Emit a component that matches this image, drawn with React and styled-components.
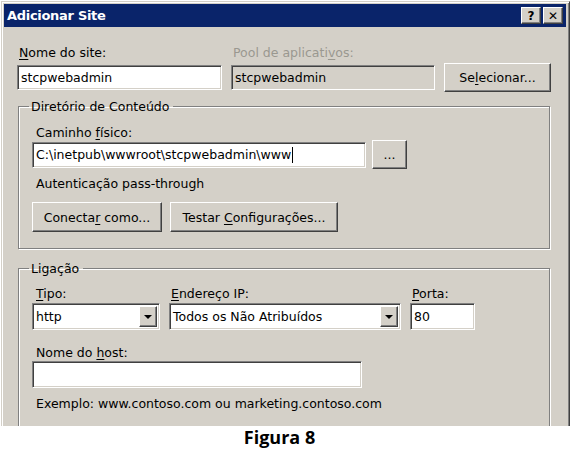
import React from 'react';
import styled, { createGlobalStyle, css } from 'styled-components';

const face = '#d4d0c8';
const shadow = '#808080';
const dark = '#404040';

const GlobalStyle = createGlobalStyle`
  html, body {
    margin: 0;
    padding: 0;
    background: #fff;
  }
  body {
    font-family: "DejaVu Sans", Verdana, sans-serif;
    font-size: 12.5px;
    color: #000;
  }
`;

const Page = styled.div`
  width: 571px;
  height: 454px;
  overflow: hidden;
  display: flex;
  flex-direction: column;
`;

const Window = styled.div`
  margin: 1px 0 0 1px;
  width: 569px;
  height: 425px;
  flex-shrink: 0;
  box-sizing: border-box;
  background: ${face};
  border-top: 1px solid ${face};
  border-left: 1px solid ${face};
  border-right: 1px solid ${dark};
  box-shadow: inset 1px 1px 0 #fff, inset -1px 0 0 ${shadow};
  padding: 2px 3px 0 2px;
  overflow: hidden;
  display: flex;
  flex-direction: column;
`;

const TitleBar = styled.div`
  height: 23px;
  flex-shrink: 0;
  background: #0a246a;
  display: flex;
  align-items: center;
  justify-content: space-between;
  padding: 0 3px 0 3px;
`;

const Title = styled.span`
  color: #fff;
  font-family: "DejaVu Sans", Verdana, sans-serif;
  font-weight: bold;
  font-size: 13px;
  letter-spacing: -0.3px;
`;

const CaptionButtons = styled.div`
  display: flex;
  gap: 2px;
`;

const raised = css`
  background: ${face};
  border-top: 1px solid #fff;
  border-left: 1px solid #fff;
  border-right: 1px solid ${dark};
  border-bottom: 1px solid ${dark};
  box-shadow: inset -1px -1px 0 ${shadow};
`;

const CaptionButton = styled.div`
  ${raised};
  width: 20px;
  height: 17px;
  box-sizing: border-box;
  display: flex;
  align-items: center;
  justify-content: center;
  font-family: "DejaVu Sans", sans-serif;
  font-weight: bold;
  font-size: 12px;
  line-height: 1;
`;

const Body = styled.div`
  padding: 18px 0 0 13px;
  display: flex;
  flex-direction: column;
  flex-shrink: 0;
`;

const TopRow = styled.div`
  display: flex;
  align-items: flex-end;
`;

const Field = styled.div`
  display: flex;
  flex-direction: column;
  margin-right: ${p => p.$mr || 0}px;
`;

const Label = styled.label`
  display: block;
  line-height: 15px;
  margin: ${p => p.$mt || 0}px 0 ${p => p.$mb ?? 5}px ${p => p.$ml ?? 2}px;
  color: ${p => (p.$disabled ? '#9a9890' : '#000')};
  white-space: nowrap;
`;

const sunken = css`
  box-sizing: border-box;
  border-top: 1px solid ${shadow};
  border-left: 1px solid ${shadow};
  border-right: 1px solid #fff;
  border-bottom: 1px solid #fff;
  box-shadow: inset 1px 1px 0 ${dark}, inset -1px -1px 0 ${face};
`;

const TextBox = styled.div`
  ${sunken};
  width: ${p => p.$w}px;
  height: ${p => p.$h || 25}px;
  background: ${p => (p.$disabled ? face : '#fff')};
  display: flex;
  align-items: center;
  padding-left: 3px;
  white-space: nowrap;
  overflow: hidden;
`;

const Caret = styled.span`
  display: inline-block;
  width: 1px;
  height: 16px;
  background: #000;
  margin-left: 1px;
`;

const Button = styled.div`
  ${raised};
  box-sizing: border-box;
  width: ${p => p.$w}px;
  height: ${p => p.$h || 30}px;
  margin-bottom: ${p => p.$mb || 0}px;
  display: flex;
  align-items: center;
  justify-content: center;
  white-space: nowrap;
`;

const Group = styled.fieldset`
  margin: ${p => p.$mt}px 0 0 1px;
  width: 532px;
  height: ${p => p.$h}px;
  box-sizing: border-box;
  border: 1px solid ${shadow};
  box-shadow: 1px 1px 0 #fff, inset 1px 1px 0 #fff;
  padding: 0 0 0 13px;
  min-width: 0;
`;

const Legend = styled.legend`
  padding: 0 4px 0 2px;
  margin-left: -3px;
  line-height: 15px;
`;

const Row = styled.div`
  display: flex;
  align-items: ${p => p.$align || 'flex-start'};
  gap: ${p => p.$gap || 0}px;
  margin-top: ${p => p.$mt || 0}px;
`;

const Text = styled.div`
  line-height: 15px;
  margin-left: 4px;
  margin-top: ${p => p.$mt || 0}px;
`;

const Combo = styled.div`
  ${sunken};
  width: ${p => p.$w}px;
  height: 27px;
  background: #fff;
  display: flex;
  align-items: center;
  padding: 2px 2px 2px 3px;
`;

const ComboText = styled.span`
  flex: 1;
  white-space: nowrap;
`;

const ComboArrow = styled.div`
  ${raised};
  box-sizing: border-box;
  width: 18px;
  height: 21px;
  display: flex;
  align-items: center;
  justify-content: center;
  &::after {
    content: '';
    border-left: 4px solid transparent;
    border-right: 4px solid transparent;
    border-top: 4px solid #000;
  }
`;

const Figure = styled.div`
  text-align: center;
  font-family: "Open Sans", "Liberation Sans", sans-serif;
  font-weight: bold;
  font-size: 18px;
  line-height: 22px;
  padding-right: 12px;
`;

const U = styled.u`
  text-decoration: underline;
  text-underline-offset: 2px;
`;

export default function App() {
  return (
    <Page>
      <GlobalStyle />
      <Window>
        <TitleBar>
          <Title>Adicionar Site</Title>
          <CaptionButtons>
            <CaptionButton>?</CaptionButton>
            <CaptionButton>✕</CaptionButton>
          </CaptionButtons>
        </TitleBar>
        <Body>
          <TopRow>
            <Field $mr={9}>
              <Label><U>N</U>ome do site:</Label>
              <TextBox $w={205}>stcpwebadmin</TextBox>
            </Field>
            <Field $mr={9}>
              <Label $disabled>Pool de aplicati<U>v</U>os:</Label>
              <TextBox $w={204} $disabled>stcpwebadmin</TextBox>
            </Field>
            <Button $w={107} $h={29} $mb={-2}>
              <span>Se<U>l</U>ecionar...</span>
            </Button>
          </TopRow>

          <Group $mt={9} $h={150}>
            <Legend>Diretório de Conteúdo</Legend>
            <Label $mt={11} $mb={0} $ml={4}>Caminho <U>f</U>ísico:</Label>
            <Row $gap={6} $align="center">
              <TextBox $w={334} $h={26}>C:\inetpub\wwwroot\stcpwebadmin\www<Caret /></TextBox>
              <Button $w={35} $h={29}>...</Button>
            </Row>
            <Text $mt={7}>Autenticação pass-through</Text>
            <Row $gap={8} $mt={11}>
              <Button $w={130}><span>Conecta<U>r</U> como...</span></Button>
              <Button $w={168}><span>Testar <U>C</U>onfigurações...</span></Button>
            </Row>
          </Group>

          <Group $mt={12} $h={200}>
            <Legend>Ligação</Legend>
            <Row $gap={9} $mt={10}>
              <Field>
                <Label $mb={2} $ml={4}><U>T</U>ipo:</Label>
                <Combo $w={128}>
                  <ComboText>http</ComboText>
                  <ComboArrow />
                </Combo>
              </Field>
              <Field>
                <Label $mb={2}><U>E</U>ndereço IP:</Label>
                <Combo $w={232}>
                  <ComboText>Todos os Não Atribuídos</ComboText>
                  <ComboArrow />
                </Combo>
              </Field>
              <Field>
                <Label $mb={2}><U>P</U>orta:</Label>
                <TextBox $w={65} $h={27}>80</TextBox>
              </Field>
            </Row>
            <Label $mt={15} $mb={1} $ml={4}>Nome do <U>h</U>ost:</Label>
            <TextBox $w={330} $h={27} />
            <Text $mt={8}>Exemplo: www.contoso.com ou marketing.contoso.com</Text>
          </Group>
        </Body>
      </Window>
      <Figure>Figura 8</Figure>
    </Page>
  );
}
